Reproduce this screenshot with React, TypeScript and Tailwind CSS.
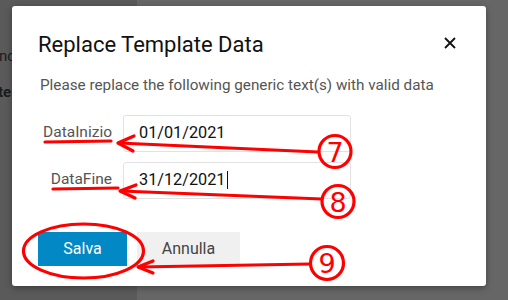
import React from "react";

export default function App() {
  return (
    <div className="relative w-[508px] h-[300px] overflow-hidden flex font-['Roboto',sans-serif]">
      <div className="w-[137px] h-full bg-[#5a5a5a] flex flex-col pt-[45px] gap-[13px] text-[15px] text-[#1c1c1c] overflow-hidden">
        <div className="whitespace-nowrap ml-[-1px]">ncarichi</div>
        <div className="whitespace-nowrap ml-[-2px] font-bold">template</div>
      </div>
      <div className="flex-1 h-full bg-[#666666]" />

      <div className="absolute left-[12px] top-[6px] w-[474px] h-[280px] bg-white rounded-[3px] shadow-[0_2px_6px_rgba(0,0,0,0.35)] pl-[26px] pr-[28px] pt-[25px]">
        <div className="flex items-start justify-between">
          <div className="text-[22px] leading-[28px] text-[#111]">Replace Template Data</div>
          <svg width="12" height="12" viewBox="0 0 12 12" className="mt-[6px] mr-[2px]">
            <path d="M1 1 L11 11 M11 1 L1 11" stroke="#111" strokeWidth="1.8" />
          </svg>
        </div>
        <div className="mt-[16px] pl-[2px] text-[15.25px] leading-[20px] text-[#555]">
          Please replace the following generic text(s) with valid data
        </div>
        <div className="mt-[19.5px] flex flex-col gap-[10px]">
          <div className="flex items-center gap-[11px]">
            <div className="w-[74px] text-right text-[15.5px] text-[#555]">DataInizio</div>
            <div className="w-[228px] h-[37px] border border-[#e2e2e2] rounded-[3px] flex items-center pl-[15px] text-[16.25px] text-[#111]">
              01/01/2021
            </div>
          </div>
          <div className="flex items-center gap-[11px]">
            <div className="w-[74px] text-right text-[15.5px] text-[#555]">DataFine</div>
            <div className="w-[228px] h-[37px] border border-[#e2e2e2] rounded-[3px] flex items-center pl-[15px] text-[16.25px] text-[#111]">
              31/12/2021
              <span className="ml-[2px] w-[1px] h-[18px] bg-[#111]" />
            </div>
          </div>
        </div>
        <div className="mt-[33px] flex gap-[10px]">
          <div className="w-[89px] h-[34px] bg-[#0288c5] text-white text-[16px] flex items-center justify-center">Salva</div>
          <div className="w-[103px] h-[34px] bg-[#f0f0f0] text-[#444] text-[16px] flex items-center justify-center">Annulla</div>
        </div>
      </div>

      <svg className="absolute left-0 top-0 pointer-events-none" width="508" height="300" viewBox="0 0 508 300">
        <g stroke="#ff0000" fill="none" strokeWidth="3.2" strokeLinecap="round" strokeLinejoin="round">
          <line x1="45" y1="142" x2="111" y2="141" />
          <line x1="53" y1="189" x2="118" y2="188" />
          <line x1="119" y1="143" x2="318" y2="152" />
          <polyline points="134,136 118,143 133,151" />
          <line x1="121" y1="191" x2="322" y2="199" />
          <polyline points="136,185 120,191 135,198" />
          <line x1="139" y1="267" x2="310" y2="264" />
          <polyline points="153,261 138,267 153,273" />
          <ellipse cx="83.5" cy="251" rx="60" ry="27" />
          <circle cx="335" cy="151.5" r="16" />
          <circle cx="338" cy="201.5" r="16" />
          <circle cx="327" cy="263" r="16.5" />
        </g>
        <g fill="#ff0000" fontFamily="'DejaVu Sans', sans-serif" fontSize="27" textAnchor="middle">
          <text x="335" y="161.5">7</text>
          <text x="338" y="211.5">8</text>
          <text x="327" y="273">9</text>
        </g>
      </svg>
    </div>
  );
}
